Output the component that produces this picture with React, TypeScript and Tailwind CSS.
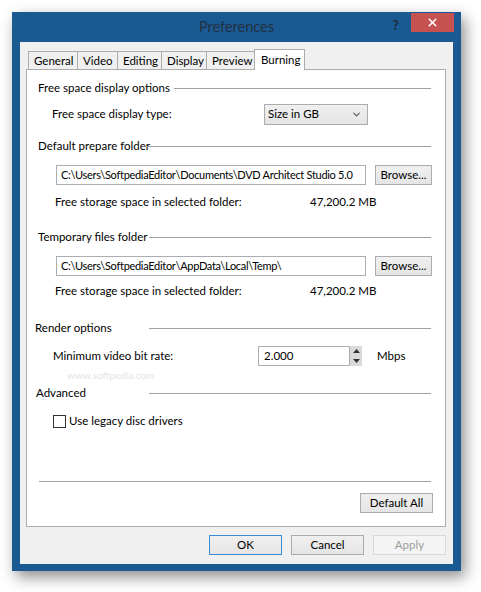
import { ChevronDown, X } from 'lucide-react'

const font = { fontFamily: 'Lato, "Noto Sans", sans-serif' }

function SectionHeader({ label, labelW, offset = 0 }: { label: string; labelW: number; offset?: number }) {
  return (
    <div className="flex h-[16px] items-center" style={{ marginLeft: offset }}>
      <span className="shrink-0 whitespace-nowrap" style={{ width: labelW }}>
        {label}
      </span>
      <div className="mr-[14px] h-px flex-1 bg-[#a0a0a0]" />
    </div>
  )
}

function WinButton({ children, className = '' }: { children: React.ReactNode; className?: string }) {
  return (
    <div
      className={
        'flex h-[20px] items-center justify-center border border-[#acacac] bg-gradient-to-b from-[#f0f0f0] to-[#e5e5e5] text-black ' +
        className
      }
    >
      {children}
    </div>
  )
}

const tabs = [
  { name: 'General', w: 50 },
  { name: 'Video', w: 41 },
  { name: 'Editing', w: 45 },
  { name: 'Display', w: 46 },
  { name: 'Preview', w: 49 },
]

export default function App() {
  return (
    <div className="h-[592px] w-[481px] bg-white pl-[12px] pt-[12px] text-[11.5px] text-black" style={font}>
      <div className="h-[559px] w-[449px] bg-[#1a5a93] px-[8px] pb-[7px] shadow-[4px_6px_14px_rgba(0,0,0,0.45)]">
        {/* title bar */}
        <div className="grid h-[30px] grid-cols-[1fr_auto_1fr]">
          <div />
          <div className="pt-[6px] text-[14.5px] leading-[18px] text-[#22303f]">Preferences</div>
          <div className="flex items-start justify-end">
            <span className="mr-[12px] mt-[2px] text-[14px] font-bold text-[#1e2a36]">?</span>
            <div className="mr-[-1px] mt-[1px] flex h-[19px] w-[43px] items-center justify-center bg-[#c75050]">
              <X className="h-[13px] w-[13px] text-white" strokeWidth={3} />
            </div>
          </div>
        </div>

        {/* client area */}
        <div className="h-[522px] bg-[#f0f0f0] pl-[6px] pr-[7px] pt-[7px]">
          {/* tabs */}
          <div className="flex h-[20px] items-end pl-[2px]">
            {tabs.map((t) => (
              <div
                key={t.name}
                className="-mr-px flex h-[18px] items-center border border-b-0 border-[#acacac] bg-[#f0f0f0] pl-[5px]"
                style={{ width: t.w }}
              >
                {t.name}
              </div>
            ))}
            <div className="relative z-10 -mb-px flex h-[21px] w-[51px] items-start border border-b-0 border-[#acacac] bg-white pl-[6px] pt-[1px]">
              Burning
            </div>
          </div>

          {/* panel */}
          <div className="h-[458px] w-[420px] border border-[#acacac] bg-white pl-[11px]">
            <div className="mt-[10px]">
              <SectionHeader label="Free space display options" labelW={136} />
            </div>
            <div className="mt-[8px] flex h-[20px] items-center">
              <span className="ml-[14px] w-[212px]">Free space display type:</span>
              <div className="flex h-[21px] w-[104px] items-center justify-between border border-[#acacac] bg-gradient-to-b from-[#f0f0f0] to-[#e5e5e5] pl-[3px] pr-[5px]">
                <span>Size in GB</span>
                <ChevronDown className="h-[11px] w-[11px] text-[#555]" strokeWidth={2.5} />
              </div>
            </div>

            <div className="mt-[14px]">
              <SectionHeader label="Default prepare folder" labelW={109} />
            </div>
            <div className="mt-[11px] flex h-[20px] items-center">
              <div className="ml-[18px] flex h-[20px] w-[310px] items-center overflow-hidden whitespace-nowrap border border-[#abadb3] bg-white pl-[4px] text-[11px] tracking-[-0.3px]">
                C:\Users\SoftpediaEditor\Documents\DVD Architect Studio 5.0
              </div>
              <WinButton className="ml-[9px] w-[57px]">Browse...</WinButton>
            </div>
            <div className="mt-[9px] flex h-[16px] items-center">
              <span className="ml-[17px] w-[255px]">Free storage space in selected folder:</span>
              <span>47,200.2 MB</span>
            </div>

            <div className="mt-[19px]">
              <SectionHeader label="Temporary files folder" labelW={111} />
            </div>
            <div className="mt-[11px] flex h-[20px] items-center">
              <div className="ml-[18px] flex h-[20px] w-[310px] items-center overflow-hidden whitespace-nowrap border border-[#abadb3] bg-white pl-[4px] text-[11px] tracking-[-0.3px]">
                C:\Users\SoftpediaEditor\AppData\Local\Temp\
              </div>
              <WinButton className="ml-[9px] w-[57px]">Browse...</WinButton>
            </div>
            <div className="mt-[7px] flex h-[16px] items-center">
              <span className="ml-[17px] w-[255px]">Free storage space in selected folder:</span>
              <span>47,200.2 MB</span>
            </div>

            <div className="mt-[21px]">
              <SectionHeader label="Render options" labelW={114} offset={-3} />
            </div>
            <div className="relative mt-[10px] flex h-[20px] items-center">
              <span className="ml-[15px] w-[205px]">Minimum video bit rate:</span>
              <div className="flex h-[20px] w-[92px] items-center border border-[#abadb3] bg-white pl-[5px]">2.000</div>
              <div className="flex h-[20px] w-[12px] flex-col items-center justify-between bg-[#d9d9d9] py-[3px] text-[#333]">
                <svg width="7" height="4" viewBox="0 0 7 4">
                  <path d="M0 4 L3.5 0 L7 4 Z" fill="#333" />
                </svg>
                <svg width="7" height="4" viewBox="0 0 7 4">
                  <path d="M0 0 L3.5 4 L7 0 Z" fill="#333" />
                </svg>
              </div>
              <span className="ml-[15px]">Mbps</span>
              <span className="pointer-events-none absolute left-[29px] top-[22px] text-[10px] text-[#e4e4e4]">
                www.softpedia.com
              </span>
            </div>

            <div className="mt-[19px]">
              <SectionHeader label="Advanced" labelW={113} offset={-2} />
            </div>
            <div className="mt-[12px] flex h-[16px] items-center">
              <div className="ml-[15px] h-[13px] w-[13px] border border-[#333] bg-white" />
              <span className="ml-[3px]">Use legacy disc drivers</span>
            </div>

            <div className="ml-[1px] mr-[14px] mt-[52px] h-px bg-[#a0a0a0]" />
            <div className="mt-[11px] flex justify-end pr-[12px]">
              <WinButton className="w-[73px]">Default All</WinButton>
            </div>
          </div>

          {/* dialog buttons */}
          <div className="mt-[8px] flex justify-end gap-[9px]">
            <WinButton className="w-[73px] !border-[#3c8bd6]">OK</WinButton>
            <WinButton className="w-[73px]">Cancel</WinButton>
            <div className="flex h-[20px] w-[73px] items-center justify-center border border-[#d9d9d9] bg-[#f4f4f4] text-[#9d9d9d]">
              Apply
            </div>
          </div>
        </div>
      </div>
    </div>
  )
}
